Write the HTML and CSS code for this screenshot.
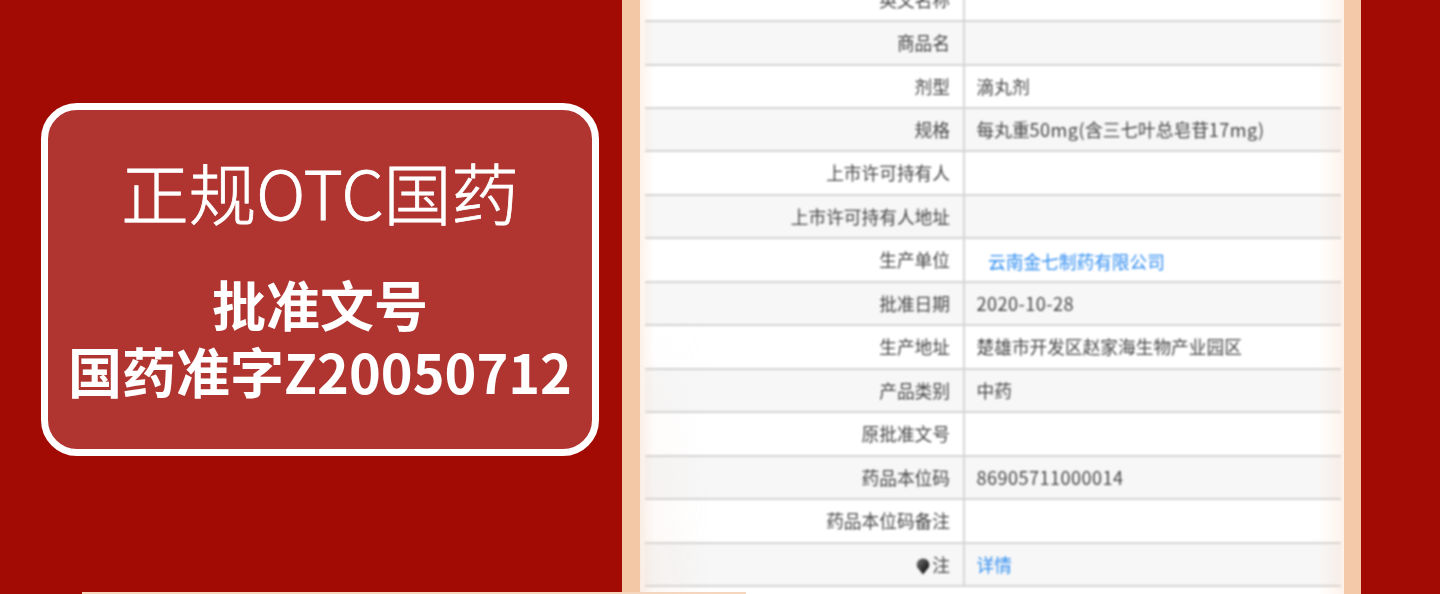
FILE: index.html
```html
<!DOCTYPE html>
<html lang="zh-CN">
<head>
<meta charset="utf-8">
<title>正规OTC国药</title>
<link rel="stylesheet" href="styles.css">
</head>
<body>
<main class="page">
  <section class="left">
    <div class="card">
      <h1 class="title">正规OTC国药</h1>
      <p class="approval">批准文号<br>国药准字Z20050712</p>
    </div>
  </section>
  <section class="panel">
    <div class="sheet">
      <div class="row"><div class="label">英文名称</div><div class="value"></div></div>
      <div class="row alt"><div class="label">商品名</div><div class="value"></div></div>
      <div class="row"><div class="label">剂型</div><div class="value">滴丸剂</div></div>
      <div class="row alt"><div class="label">规格</div><div class="value">每丸重<span class="num">50mg(</span>含三七叶总皂苷<span class="num">17mg)</span></div></div>
      <div class="row"><div class="label">上市许可持有人</div><div class="value"></div></div>
      <div class="row alt"><div class="label">上市许可持有人地址</div><div class="value"></div></div>
      <div class="row"><div class="label">生产单位</div><div class="value link indent">云南金七制药有限公司</div></div>
      <div class="row alt"><div class="label">批准日期</div><div class="value"><span class="num">2020-10-28</span></div></div>
      <div class="row"><div class="label">生产地址</div><div class="value">楚雄市开发区赵家海生物产业园区</div></div>
      <div class="row alt"><div class="label">产品类别</div><div class="value">中药</div></div>
      <div class="row"><div class="label">原批准文号</div><div class="value"></div></div>
      <div class="row alt"><div class="label">药品本位码</div><div class="value"><span class="num">86905711000014</span></div></div>
      <div class="row"><div class="label">药品本位码备注</div><div class="value"></div></div>
      <div class="row alt"><div class="label"><svg class="pin" viewBox="0 0 13 16"><defs><linearGradient id="pinfill" x1="0" y1="0" x2="1" y2="1"><stop offset="0" stop-color="#777"/><stop offset="1" stop-color="#000"/></linearGradient></defs><path fill="url(#pinfill)" d="M6.5 15.5 1 8.6A5.9 5.9 0 0 1 6.5.5 5.9 5.9 0 0 1 12 8.6Z"/></svg>注</div><div class="value link">详情</div></div>
    </div>
  </section>
  <div class="strip"></div>
</main>
</body>
</html>
```

FILE: styles.css
```css
* { box-sizing: border-box; }
html, body { margin: 0; padding: 0; }
body { background: #a20b04; overflow: hidden; }
.page {
  position: relative;
  width: 1440px;
  height: 594px;
  overflow: hidden;
  display: flex;
  font-family: "Noto Sans CJK SC", "Noto Sans", sans-serif;
}
.left {
  width: 622px;
  flex: none;
  padding: 103px 23px 0 41px;
}
.card {
  height: 353px;
  border: 7px solid #fff;
  border-radius: 36px;
  background: #b03530;
  color: #fff;
  text-align: center;
  padding-top: 41px;
}
.title {
  margin: 0;
  font-size: 67.5px;
  font-weight: 300;
  -webkit-text-stroke: 0.8px #fff;
  line-height: 80px;
}
.approval {
  margin: 39px 0 0;
  font-size: 54px;
  font-weight: 700;
  line-height: 67px;
  white-space: nowrap;
}
.panel {
  position: relative;
  width: 739px;
  height: 594px;
  flex: none;
  background: #fff;
  border-left: 18px solid #f2c8a7;
  border-right: 17px solid #f3c9a9;
  padding: 0 3px 7px 5px;
  overflow: hidden;
  display: flex;
  flex-direction: column;
  justify-content: flex-end;
}
.panel::after {
  content: "";
  position: absolute;
  inset: 0;
  background:
    linear-gradient(to right, rgba(246, 205, 175, .25), rgba(246, 205, 175, 0) 14px),
    linear-gradient(to left, rgba(246, 205, 175, .25), rgba(246, 205, 175, 0) 26px);
}
.panel::before {
  content: "";
  position: absolute;
  z-index: 1;
  left: 0;
  top: 300px;
  bottom: 0;
  width: 70px;
  background: linear-gradient(to right, rgba(240, 215, 205, .22), rgba(240, 215, 205, 0));
  -webkit-mask-image: linear-gradient(to bottom, transparent, #000);
  mask-image: linear-gradient(to bottom, transparent, #000);
}
.sheet { filter: blur(0.8px); flex: none; }
.row {
  display: flex;
  height: 43.46px;
  border-bottom: 2px solid #d4d4d4;
  font-size: 17.7px;
  color: #444;
  line-height: 41px;
}
.row.alt { background: #f7f7f7; }
.label {
  width: 319.5px;
  flex: none;
  text-align: right;
  padding-right: 12.5px;
  border-right: 2px solid #d6d6d6;
  white-space: nowrap;
}
.value {
  flex: 1;
  padding-left: 12px;
  white-space: nowrap;
}
.num { font-size: 18.1px; letter-spacing: 0.45px; }
.link { color: #2f8df0; }
.indent { padding-left: 23.5px; line-height: 44px; }
.pin {
  width: 14px;
  height: 17px;
  margin-right: 2px;
  vertical-align: -3px;
}
.strip {
  position: absolute;
  left: 82px;
  top: 592px;
  width: 664px;
  height: 2px;
  background: #f6d6bd;
}
```
